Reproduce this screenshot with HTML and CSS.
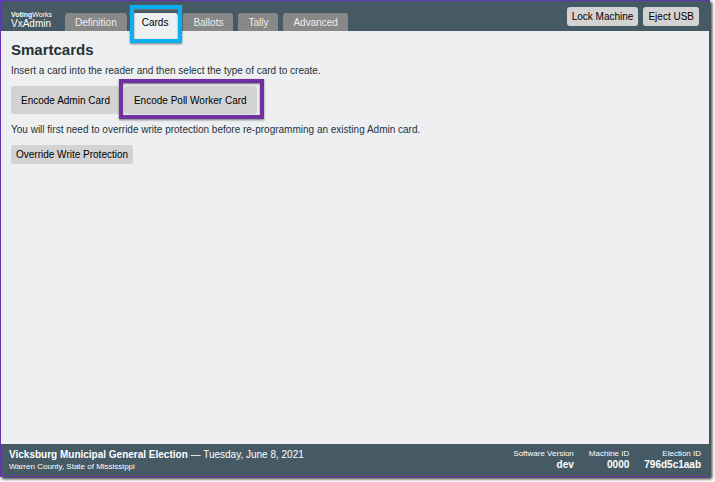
FILE: index.html
```html
<!DOCTYPE html>
<html lang="en">
<head>
<meta charset="utf-8">
<title>VxAdmin</title>
<link rel="stylesheet" href="styles.css">
</head>
<body>
<div class="screen">
  <header class="topbar">
    <div class="brand"><span class="brand-org"><b>Voting</b>Works</span><span class="brand-app">VxAdmin</span></div>
    <nav class="tabs">
      <button class="tab" type="button">Definition</button>
      <button class="tab active marked marked-tab" type="button">Cards</button>
      <button class="tab" type="button">Ballots</button>
      <button class="tab" type="button">Tally</button>
      <button class="tab" type="button">Advanced</button>
    </nav>
    <div class="actions">
      <button class="btn" type="button">Lock Machine</button>
      <button class="btn" type="button">Eject USB</button>
    </div>
  </header>
  <main class="content">
    <h1>Smartcards</h1>
    <p>Insert a card into the reader and then select the type of card to create.</p>
    <div class="row">
      <button class="btn large" type="button">Encode Admin Card</button>
      <button class="btn large marked marked-button" type="button">Encode Poll Worker Card</button>
    </div>
    <p>You will first need to override write protection before re-programming an existing Admin card.</p>
    <button class="btn" type="button">Override Write Protection</button>
  </main>
  <footer class="statusbar">
    <div class="election">
      <div class="election-name"><b>Vicksburg Municipal General Election</b> — Tuesday, June 8, 2021</div>
      <div class="small">Warren County, State of Mississippi</div>
    </div>
    <dl class="facts">
      <div><dt>Software Version</dt><dd>dev</dd></div>
      <div><dt>Machine ID</dt><dd>0000</dd></div>
      <div><dt>Election ID</dt><dd>796d5c1aab</dd></div>
    </dl>
  </footer>
</div>
</body>
</html>
```
FILE: styles.css
```css
* { box-sizing: border-box; }
body {
  margin: 0;
  height: 100vh;
  padding: 0 5px 5px 0;
  background: #fff;
  color: #263238;
  font: 10px/14px "Liberation Sans", Arial, sans-serif;
}
button { font: inherit; border: 0; margin: 0; }
h1, p, dl, dd { margin: 0; }
.screen {
  display: flex;
  flex-direction: column;
  height: 100%;
  border: 1px solid #6233b5;
  background: #edeff0;
  box-shadow: 2px 2px 3px #333;
}
.topbar {
  display: flex;
  height: 30px;
  padding: 0 10px;
  background: #455a64;
  color: #fff;
}
.brand {
  display: flex;
  flex-direction: column;
  width: 44px;
  margin-right: 10px;
  padding-top: 9px;
}
.brand-org { font-size: 7px; line-height: 9px; }
.brand-app { font-size: 10px; line-height: 9px; }
.tabs { display: flex; align-items: flex-end; gap: 5px; }
.tab {
  height: 18px;
  padding: 2px 10px 0;
  border-radius: 3px 3px 0 0;
  background: #888;
  color: #edeff0;
}
.tab.active { background: #edeff0; color: #000; }
.marked { position: relative; }
.marked::after { content: ""; position: absolute; pointer-events: none; }
.marked-tab::after {
  inset: -8px -4px -12px -2px;
  border: 4px solid #08aeef;
  box-shadow: 0 1px 2px #777, inset 0 1px 2px #777;
}
.marked-button::after {
  inset: -7px -7px -5px -5px;
  border: 4px solid #7030a0;
  box-shadow: 0 1px 2px #777, inset 0 1px 2px #777;
}
.actions { display: flex; gap: 5px; margin-left: auto; padding-top: 6px; }
.btn {
  height: 19px;
  padding: 1px 5px 0;
  border-radius: 3px;
  background: #d3d3d3;
  color: #000;
  white-space: nowrap;
}
.btn.large { height: 28px; padding: 1px 10px 0; }
.content { flex: 1; padding: 10px; }
h1 { font-size: 15px; line-height: 18px; margin-bottom: 5px; }
.content p { margin-bottom: 8px; }
.row { display: flex; gap: 4px; margin-bottom: 9px; }
.statusbar {
  display: flex;
  justify-content: space-between;
  height: 32px;
  padding: 4px 8px;
  background: #455a64;
  color: #fff;
}
.election-name { line-height: 14px; }
.small { font-size: 8px; line-height: 9px; }
.facts { display: flex; gap: 15px; text-align: right; }
.facts dt { font-size: 8px; line-height: 11px; }
.facts dd { font-weight: bold; line-height: 12px; }
```
